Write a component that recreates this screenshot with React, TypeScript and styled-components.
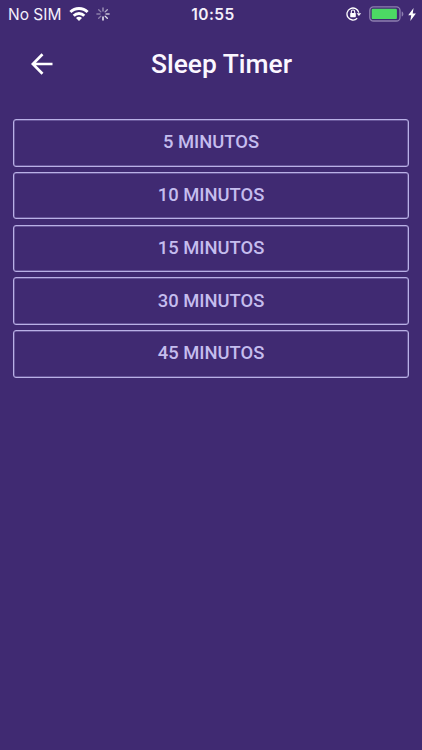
import React from 'react';
import styled, { createGlobalStyle } from 'styled-components';

const GlobalStyle = createGlobalStyle`
  * { box-sizing: border-box; }
  body { margin: 0; background: #402a72; }
`;

const Screen = styled.div`
  min-height: 100vh;
  background: #402a72;
  font-family: Roboto, "Liberation Sans", sans-serif;
`;

const StatusBar = styled.div`
  height: 28px;
  display: grid;
  grid-template-columns: 1fr auto 1fr;
  align-items: center;
  padding: 0 6px 0 8px;
  font-family: Inter, "Liberation Sans", sans-serif;
  color: #f4effb;
`;

const StatusGroup = styled.div<{ $end?: boolean }>`
  display: flex;
  align-items: center;
  justify-content: ${(p) => (p.$end ? 'flex-end' : 'flex-start')};
`;

const Carrier = styled.span`
  font-size: 15.5px;
  line-height: 26px;
  padding-top: 2px;
  width: 61px;
  white-space: nowrap;
`;

const Clock = styled.span`
  font-size: 15.5px;
  font-weight: 600;
  line-height: 26px;
  letter-spacing: 0.45px;
  padding: 2px 0 0 2px;
`;

const Icon = styled.svg<{ $gap?: number }>`
  display: block;
  flex: none;
  margin-left: ${(p) => p.$gap ?? 0}px;
`;

const Header = styled.header`
  height: 72px;
  display: grid;
  grid-template-columns: 56px 1fr 36px;
  align-items: center;
  padding: 0 13px 0 14px;
`;

const BackButton = styled.button`
  width: 56px;
  height: 56px;
  display: grid;
  place-items: center;
  padding: 0;
  border: 0;
  background: none;
  color: #fff;
`;

const Title = styled.h1`
  margin: 0;
  text-align: center;
  font-size: 26.4px;
  font-weight: 500;
  line-height: 32px;
  color: #fbf7ff;
`;

const Options = styled.main`
  display: flex;
  flex-direction: column;
  gap: 5.3px;
  padding: 19px 13px 0;
`;

const Option = styled.button`
  height: 47.5px;
  padding: 0 0 2px;
  border: 1px solid #b9b0e6;
  border-radius: 3px;
  box-shadow: inset 0 0 0 0.5px #8d80bf;
  background: none;
  font-family: inherit;
  font-size: 18.4px;
  font-weight: 500;
  color: #c5bdee;
`;

const durations = [5, 10, 15, 30, 45];

const spokes = [0.5, 0.6, 0.7, 0.85, 1, 0.4, 0.4, 0.4];

export default function App() {
  return (
    <Screen>
      <GlobalStyle />
      <StatusBar>
        <StatusGroup>
          <Carrier>No SIM</Carrier>
          <Icon width="20" height="14" viewBox="0 0 20 14" fill="none" stroke="#fff" strokeWidth="2.9">
            <path d="M1.4 5.1a12.1 12.1 0 0 1 17.2 0" />
            <path d="M4.7 8.7a7.5 7.5 0 0 1 10.6 0" />
            <path d="M10 13.9 7 10.9a4.2 4.2 0 0 1 6 0z" fill="#fff" stroke="none" />
          </Icon>
          <Icon $gap={7} width="14" height="14" viewBox="0 0 14 14" stroke="#fff" strokeWidth="1.4" strokeLinecap="round">
            {spokes.map((opacity, i) => (
              <path key={i} d="M7 .9v3.1" opacity={opacity} transform={`rotate(${i * 45} 7 7)`} />
            ))}
          </Icon>
        </StatusGroup>
        <Clock>10:55</Clock>
        <StatusGroup $end>
          <Icon width="16" height="14" viewBox="0 0 16 14" fill="none" stroke="#fff" strokeWidth="1.3">
            <path d="M11.2 11.3A6 6 0 1 1 12.8 5.6" />
            <path d="M10.6 6.2h4.6l-2.3 2.8z" fill="#fff" stroke="none" />
            <path d="M5.3 6.3V4.7a1.7 1.7 0 0 1 3.4 0v1.6" strokeWidth="1.1" />
            <rect x="4.2" y="6" width="5.6" height="4.2" rx=".6" fill="#fff" stroke="none" />
          </Icon>
          <Icon $gap={7} width="36" height="16" viewBox="0 0 36 16">
            <rect x=".8" y=".8" width="30.2" height="14.2" rx="3.6" fill="none" stroke="#8d7fb0" strokeWidth="1.3" />
            <rect x="2.7" y="2.7" width="25.2" height="10.4" rx="1.2" fill="#4cd964" />
            <path d="M32.7 5.5c2.2.6 2.2 4.4 0 5z" fill="#8d7fb0" />
          </Icon>
          <Icon $gap={3} width="8" height="13" viewBox="0 0 8 13" fill="#fff">
            <path d="M5.6 0 .2 7.2h3L2.3 13 7.9 5.6H4.7z" />
          </Icon>
        </StatusGroup>
      </StatusBar>
      <Header>
        <BackButton aria-label="Back">
          <Icon width="22" height="22" viewBox="0 0 22 22" fill="none" stroke="currentColor" strokeWidth="2.7">
            <path d="M21.5 11H2.3M11.5 1.2 1.8 11l9.7 9.8" />
          </Icon>
        </BackButton>
        <Title>Sleep Timer</Title>
      </Header>
      <Options>
        {durations.map((minutes) => (
          <Option key={minutes}>{minutes} MINUTOS</Option>
        ))}
      </Options>
    </Screen>
  );
}
